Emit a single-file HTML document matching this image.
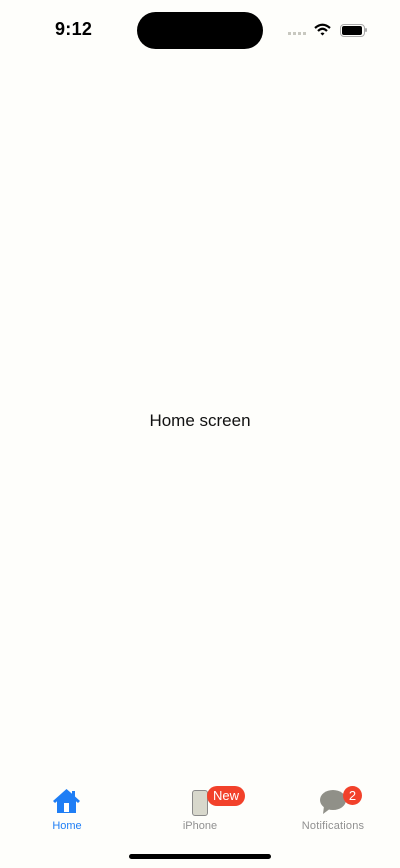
<!DOCTYPE html>
<html><head><meta charset="utf-8"><style>
html,body{margin:0;padding:0}
body{width:400px;height:868px;position:relative;overflow:hidden;background:#fefefb;font-family:"Liberation Sans",sans-serif;}
.a{position:absolute}
</style></head><body>
<div class="a" style="left:55px;top:19px;font-size:18px;font-weight:bold;color:#000;letter-spacing:0.3px">9:12</div>
<div class="a" style="left:137px;top:12px;width:126px;height:37px;border-radius:19px;background:#000"></div>
<div class="a" style="left:288px;top:32px;width:18px;height:3px;background:repeating-linear-gradient(90deg,#c8c8c0 0 3px,transparent 3px 5px)"></div>
<svg class="a" style="left:314px;top:23px" width="17" height="13" viewBox="0 0 17 13"><path d="M1 5 Q8.5 -1.5 16 5" stroke="#000" stroke-width="2.2" fill="none"/><path d="M4 8 Q8.5 3.5 13 8" stroke="#000" stroke-width="2.2" fill="none"/><path d="M6.5 10.5 L8.5 12.5 L10.5 10.5 Q8.5 8.6 6.5 10.5Z" fill="#000"/></svg>
<div class="a" style="left:340px;top:24px;width:23px;height:11px;border:1px solid #aaa;border-radius:4px"></div>
<div class="a" style="left:342px;top:26px;width:20px;height:9px;background:#000;border-radius:2px"></div>
<div class="a" style="left:365px;top:28px;width:2px;height:4px;background:#aaa;border-radius:1px"></div>
<div class="a" style="left:0;top:411px;width:400px;text-align:center;font-size:17px;color:#111">Home screen</div>
<svg class="a" style="left:52px;top:788px" width="29" height="26" viewBox="0 0 29 26"><path d="M14.5 1 L1 13 L3 15 L5 13.2 V25 H24 V13.2 L26 15 L28 13 L23 8.5 V3 H20 V5.8 Z" fill="#1f7ef5"/><rect x="12" y="15" width="5" height="9" fill="#fff"/></svg>
<div class="a" style="left:30px;top:820px;width:74px;text-align:center;font-size:11px;color:#1f7ef5">Home</div>
<div class="a" style="left:192px;top:790px;width:14px;height:24px;border:1.5px solid #8a8a8a;border-radius:3px;background:#d8d8cc"></div>
<div class="a" style="left:207px;top:786px;width:38px;height:20px;border-radius:10px;background:#f2412a;color:#fff;font-size:13px;text-align:center;line-height:20px">New</div>
<div class="a" style="left:165px;top:820px;width:70px;text-align:center;font-size:11px;color:#909090">iPhone</div>
<svg class="a" style="left:319px;top:789px" width="28" height="26" viewBox="0 0 28 26"><ellipse cx="14" cy="11" rx="13" ry="10" fill="#909088"/><path d="M5 17 L4 25 L12 19Z" fill="#909088"/></svg>
<div class="a" style="left:343px;top:786px;width:19px;height:19px;border-radius:10px;background:#f2412a;color:#fff;font-size:13px;text-align:center;line-height:19px">2</div>
<div class="a" style="left:288px;top:820px;width:90px;text-align:center;font-size:11px;color:#909090;letter-spacing:0.2px">Notifications</div>
<div class="a" style="left:129px;top:854px;width:142px;height:5px;border-radius:3px;background:#000"></div>
</body></html>
